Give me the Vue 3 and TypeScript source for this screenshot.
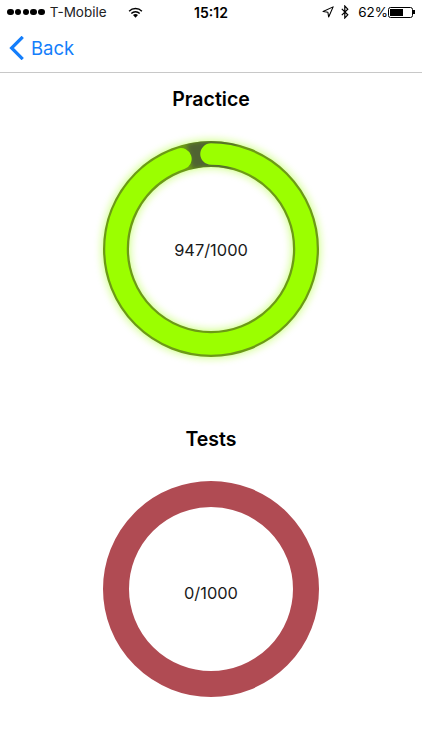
<script setup lang="ts">
const R = 95
const circ = 2 * Math.PI * R
const practice = 947
const total = 1000
const dash = `${(circ * practice) / total} ${circ}`
const gapArc = `${circ * 0.075} ${circ}`
</script>

<template>
  <div class="page">
    <header class="status">
      <div class="side">
        <span class="dots"><i v-for="n in 5" :key="n"></i></span>
        <span class="carrier">T-Mobile</span>
        <svg class="wifi" width="15" height="11" viewBox="0 0 15 11">
          <path d="M.6 3.7a9.8 9.8 0 0 1 13.8 0l-1 1a8.4 8.4 0 0 0-11.8 0z" fill="#000" />
          <path d="M2.8 5.9a6.7 6.7 0 0 1 9.4 0l-1 1a5.3 5.3 0 0 0-7.4 0z" fill="#000" />
          <path d="M5 8.1a3.6 3.6 0 0 1 5 0l-2.5 2.6z" fill="#000" />
        </svg>
      </div>
      <div class="time">15:12</div>
      <div class="side right">
        <svg class="loc" width="12" height="12" viewBox="0 0 11 11">
          <path d="M10.2.8 1 5l4.4.7.7 4.4z" fill="none" stroke="#000" stroke-width="1" stroke-linejoin="round" />
        </svg>
        <svg class="bt" width="8" height="14" viewBox="0 0 8 14">
          <path d="M.8 3.8 6.8 9.8 3.8 13V1l3 3.2-6 6" fill="none" stroke="#000" stroke-width="1.2" />
        </svg>
        <span class="pct">62%</span>
        <span class="battery"><span class="level"></span></span>
        <span class="nub"></span>
      </div>
    </header>

    <nav class="nav">
      <a class="back">
        <svg width="15" height="24" viewBox="0 0 15 24">
          <path d="M12.6 2 2.6 12l10 10" fill="none" stroke="#147efb" stroke-width="3.2" stroke-linecap="square" />
        </svg>
        <span>Back</span>
      </a>
    </nav>

    <main class="content">
      <section class="block">
        <h2>Practice</h2>
        <div class="ring-wrap">
          <svg class="ring" width="240" height="240" viewBox="0 0 240 240">
            <defs>
              <filter id="glow" x="-20%" y="-20%" width="140%" height="140%">
                <feGaussianBlur stdDeviation="4.5" />
              </filter>
              <filter id="soft" x="-30%" y="-30%" width="160%" height="160%">
                <feGaussianBlur stdDeviation="2" />
              </filter>
              <mask id="band">
                <circle cx="120" cy="120" :r="R" fill="none" stroke="#fff" stroke-width="26" />
              </mask>
            </defs>
            <circle cx="120" cy="120" :r="R" fill="none" stroke="#a4ff1a" stroke-width="27" opacity="0.6" filter="url(#glow)" />
            <circle cx="120" cy="120" :r="R" fill="none" stroke="#6c9a16" stroke-width="26" />
            <g mask="url(#band)">
              <circle
                cx="120"
                cy="120"
                :r="R"
                fill="none"
                stroke="#4f6330"
                stroke-width="26"
                :stroke-dasharray="gapArc"
                transform="rotate(-103 120 120)"
                filter="url(#soft)"
              />
            </g>
            <circle
              cx="120"
              cy="120"
              :r="R"
              fill="none"
              stroke="#9bff00"
              stroke-width="21.5"
              stroke-linecap="round"
              :stroke-dasharray="dash"
              transform="rotate(-90 120 120)"
            />
          </svg>
          <span class="label label-upper">947/1000</span>
        </div>
      </section>

      <section class="block">
        <h2>Tests</h2>
        <div class="ring-wrap">
          <svg class="ring" width="240" height="240" viewBox="0 0 240 240">
            <circle cx="120" cy="120" :r="R" fill="none" stroke="#b04b53" stroke-width="26" />
          </svg>
          <span class="label label-lower">0/1000</span>
        </div>
      </section>
    </main>
  </div>
</template>

<style>
html,
body {
  margin: 0;
  background: #fff;
}
</style>

<style scoped>
.page {
  width: 422px;
  height: 750px;
  overflow: hidden;
  background: #fff;
  color: #000;
  font-family: Inter, "Liberation Sans", sans-serif;
}
.status {
  height: 24px;
  display: grid;
  grid-template-columns: 1fr auto 1fr;
  align-items: center;
  padding: 0 7px;
  box-sizing: border-box;
  font-size: 13.5px;
}
.side {
  display: flex;
  align-items: center;
}
.side.right {
  justify-content: flex-end;
  gap: 7px;
}
.dots {
  display: flex;
  gap: 1.2px;
}
.dots i {
  width: 6.6px;
  height: 6.6px;
  border-radius: 50%;
  background: #000;
}
.carrier {
  margin-left: 5px;
  color: #222;
}
.wifi {
  margin-left: 21px;
}
.time {
  font-weight: 600;
  font-size: 14px;
}
.pct {
  margin-left: 2px;
  margin-right: -7px;
}
.battery {
  width: 25px;
  height: 11px;
  box-sizing: border-box;
  border: 1px solid #000;
  border-radius: 2.5px;
  padding: 1px;
  display: flex;
  margin-right: -7px;
}
.level {
  width: 62%;
  background: #000;
}
.nub {
  width: 2px;
  height: 4px;
  background: #000;
}
.nav {
  height: 49px;
  box-sizing: border-box;
  border-bottom: 1px solid #c8c8c8;
  display: flex;
  align-items: center;
  padding-left: 9px;
}
.back {
  display: flex;
  align-items: center;
  gap: 7px;
  color: #147efb;
  font-size: 18.5px;
}
.content {
  display: flex;
  flex-direction: column;
  align-items: center;
  gap: 58px;
  padding-top: 14px;
}
.block {
  display: flex;
  flex-direction: column;
  align-items: center;
  gap: 18px;
}
h2 {
  margin: 0;
  font-size: 19.5px;
  line-height: 24px;
  font-weight: 600;
}
.ring-wrap {
  display: grid;
  place-items: center;
}
.ring,
.label {
  grid-area: 1 / 1;
}
.ring {
  display: block;
}
.label {
  font-size: 16.4px;
  color: #1a1a1a;
}
.label-upper {
  padding-top: 2px;
}
.label-lower {
  padding-top: 8px;
}
</style>
